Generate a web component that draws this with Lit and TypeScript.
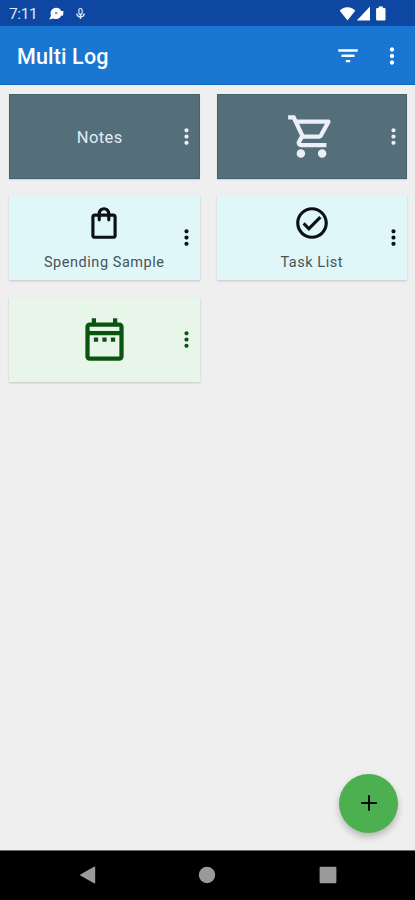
import { LitElement, html, css, svg, nothing } from "lit";
import { customElement, property } from "lit/decorators.js";

const ICONS: Record<string, string> = {
  more: "M12 8c1.1 0 2-.9 2-2s-.9-2-2-2-2 .9-2 2 .9 2 2 2zm0 2c-1.1 0-2 .9-2 2s.9 2 2 2 2-.9 2-2-.9-2-2-2zm0 6c-1.1 0-2 .9-2 2s.9 2 2 2 2-.9 2-2-.9-2-2-2z",
  filter: "M10 17.800h4v-2.200h-4v2.200zM3 5.800v2.200h18V5.800H3zm3 7.100h12v-2.200H6v2.200z",
  cart: "M15.55 13c.75 0 1.41-.41 1.75-1.03l3.58-6.49c.37-.66-.11-1.48-.87-1.48H5.21l-.94-2H1v2h2l3.6 7.59-1.35 2.44C4.52 15.37 5.48 17 7 17h12v-2H7l1.1-2h7.45zM6.16 6h12.15l-2.76 5H8.53L6.16 6zM7 18c-1.1 0-1.99.9-1.99 2S5.9 22 7 22s2-.9 2-2-.9-2-2-2zm10 0c-1.1 0-1.99.9-1.99 2s.89 2 1.99 2 2-.9 2-2-.9-2-2-2z",
  bag: "M18 6h-2c0-2.21-1.79-4-4-4S8 3.79 8 6H6c-1.1 0-2 .9-2 2v12c0 1.1.9 2 2 2h12c1.1 0 2-.9 2-2V8c0-1.1-.9-2-2-2zm-6-2c1.1 0 2 .9 2 2h-4c0-1.1.9-2 2-2zm6 16H6V8h2v2c0 .55.45 1 1 1s1-.45 1-1V8h4v2c0 .55.45 1 1 1s1-.45 1-1V8h2v12z",
  check: "M16.59 7.58L10 14.17l-2.59-2.58L6 13l4 4 8-8zM12 2C6.48 2 2 6.48 2 12s4.48 10 10 10 10-4.48 10-10S17.52 2 12 2zm0 18c-4.42 0-8-3.58-8-8s3.58-8 8-8 8 3.58 8 8-3.58 8-8 8z",
  calendar: "M7 11h2v2H7v-2zm14-5v14c0 1.1-.9 2-2 2H5c-1.11 0-2-.9-2-2l.01-14c0-1.1.88-2 1.99-2h1V2h2v2h8V2h2v2h1c1.1 0 2 .9 2 2zM5 8h14V6H5v2zm14 12V10H5v10h14zm-4-7h2v-2h-2v2zm-4 0h2v-2h-2v2z",
  add: "M19.200 12.850h-6.350v6.350h-1.700v-6.350H4.800v-1.700h6.350V4.800h1.700v6.350h6.350z",
};

@customElement("app-icon")
class AppIcon extends LitElement {
  static styles = css`
    :host { display: block; width: 24px; height: 24px; }
    svg { display: block; width: 100%; height: 100%; fill: currentColor; }
  `;
  @property() name = "";
  render() {
    return html`<svg viewBox="0 0 24 24">${svg`<path d=${ICONS[this.name] ?? ""}></path>`}</svg>`;
  }
}

@customElement("log-card")
class LogCard extends LitElement {
  static styles = css`
    :host {
      display: grid;
      grid-template-columns: 26px 1fr 26px;
      align-items: center;
      box-sizing: border-box;
      height: 85px;
      box-shadow: 0 1px 2px rgba(0, 0, 0, 0.18);
    }
    :host([tone="slate"]) { background: #546e7a; color: #eceff8; box-shadow: inset 0 0 0 1px #45646f, 0 1px 1px rgba(0, 0, 0, 0.12); }
    :host([tone="cyan"]) { background: #e0f7fa; color: #0b1215; }
    :host([tone="green"]) { background: #e8f5e9; color: #0b5410; }
    .body { grid-column: 2; display: flex; flex-direction: column; align-items: center; }
    .big { width: 51px; height: 51px; }
    .small { width: 38px; height: 38px; margin-top: 2px; }
    .label { font-size: 14.5px; line-height: 20px; letter-spacing: 0.55px; color: #465458; margin: 11px 0 0; white-space: nowrap; }
    .title { font-size: 16.5px; line-height: 22px; letter-spacing: 0.4px; color: #e3edf5; margin: 4px 9px 0 0; }
    .menu { width: 25px; height: 25px; }
  `;
  @property() icon = "";
  @property() label = "";
  render() {
    const both = this.icon && this.label;
    return html`
      <div class="body">
        ${this.icon ? html`<app-icon class=${both ? "small" : "big"} name=${this.icon}></app-icon>` : nothing}
        ${this.label ? html`<div class=${both ? "label" : "title"}>${this.label}</div>` : nothing}
      </div>
      <app-icon class="menu" name="more"></app-icon>
    `;
  }
}

const CARDS = [
  { tone: "slate", icon: "", label: "Notes" },
  { tone: "slate", icon: "cart", label: "" },
  { tone: "cyan", icon: "bag", label: "Spending Sample" },
  { tone: "cyan", icon: "check", label: "Task List" },
  { tone: "green", icon: "calendar", label: "" },
];

@customElement("app-root")
class AppRoot extends LitElement {
  static styles = css`
    :host {
      display: flex;
      flex-direction: column;
      position: relative;
      width: 100%;
      height: 900px;
      overflow: hidden;
      background: #efefef;
      font-family: Roboto, "Liberation Sans", sans-serif;
    }
    .status { display: flex; align-items: center; height: 26px; box-sizing: border-box; padding: 1px 28px 0 9px; background: #0d47a1; color: #dfe8fb; }
    .time { font-size: 15.5px; line-height: 20px; letter-spacing: -0.4px; width: 40px; }
    .status svg { display: block; fill: currentColor; }
    .right { display: flex; margin-left: auto; color: #fff; }
    .bar { display: flex; align-items: center; height: 59px; box-sizing: border-box; padding: 0 10px 0 17px; background: #1976d2; color: #fff; border-bottom: 1px solid #1467c0; }
    .bar h1 { flex: 1; margin: 0; padding-top: 4px; font-size: 21.5px; line-height: 28px; font-weight: 500; letter-spacing: 0.15px; }
    .filter { width: 26px; height: 26px; margin: 1px 18.5px 0 0; }
    .more { width: 26px; height: 26px; margin-top: 1px; }
    .grid { flex: 1; display: grid; grid-template-columns: 190.5px 190.5px; grid-auto-rows: 85px; column-gap: 17px; row-gap: 16.5px; padding: 8.6px 0 0 9px; align-content: start; }
    .fab { position: absolute; right: 17px; bottom: 67.5px; width: 59px; height: 59px; border-radius: 50%; display: flex; align-items: center; justify-content: center; background: #4caf50; color: #000; box-shadow: 0 4px 7px rgba(0, 0, 0, 0.24); }
    .fab app-icon { width: 26px; height: 26px; }
    .nav { height: 50px; box-sizing: border-box; border-top: 1px solid #6d6d6d; background: #000; display: flex; justify-content: space-between; align-items: center; padding: 0 78.5px 1.5px 78px; }
    .nav svg { display: block; fill: #9a9a9a; }
  `;
  render() {
    return html`
      <div class="status">
        <div class="time">7:11</div>
        <svg width="15" height="14" viewBox="0 0 15 14">
          <path fill="#fff" d="M7 .8a5.500 5.500 0 0 1 5.200 3.300l2.300-.1-.4 4.400-2 .3A5.500 5.500 0 0 1 4.400 11.400L.2 12.600l1.100-2.400L2 8.500A5.500 5.500 0 0 1 7 .8z"></path>
          <circle cx="7.200" cy="6" r="1.300" fill="#7a9ad4"></circle>
        </svg>
        <svg width="24" height="14" viewBox="0 0 24 14">
          <rect x="14.900" y="1.500" width="3.200" height="6" rx="1.600" fill="none" stroke="currentColor" stroke-width="1.200"></rect>
          <path d="M12.800 6.500q.3 3.200 3.700 3.500q3.400-.3 3.700-3.500M16.500 6.500v5.500" fill="none" stroke="currentColor" stroke-width="1.400"></path>
        </svg>
        <div class="right">
          <svg width="48" height="16" viewBox="0 0 48 16">
            <path d="M8.500 14.500L.8 4.700Q1 3.500 3.500 2.400Q8.500 -.1 13.500 2.400Q16 3.500 16.200 4.700z"></path>
            <path d="M31 .5v14H17.800z"></path>
            <path d="M39.700 .5h4.200v1.500h1.600q1 0 1 1V13.500q0 1-1 1h-7.400q-1 0-1-1V3q0-1 1-1h1.600z"></path>
          </svg>
        </div>
      </div>
      <div class="bar">
        <h1>Multi Log</h1>
        <app-icon class="filter" name="filter"></app-icon>
        <app-icon class="more" name="more"></app-icon>
      </div>
      <div class="grid">
        ${CARDS.map((c) => html`<log-card tone=${c.tone} .icon=${c.icon} .label=${c.label}></log-card>`)}
      </div>
      <div class="nav">
        <svg width="18" height="18" viewBox="0 0 18 18"><path d="M1.500 9L16 .7q1.200-.4 1.200.8v15q0 1.200-1.200.8z"></path></svg>
        <svg width="18" height="18" viewBox="0 0 18 18"><circle cx="9" cy="9" r="8.200"></circle></svg>
        <svg width="18" height="18" viewBox="0 0 18 18"><rect x=".6" y=".8" width="16.800" height="16.400" rx="1"></rect></svg>
      </div>
      <div class="fab"><app-icon name="add"></app-icon></div>
    `;
  }
}
